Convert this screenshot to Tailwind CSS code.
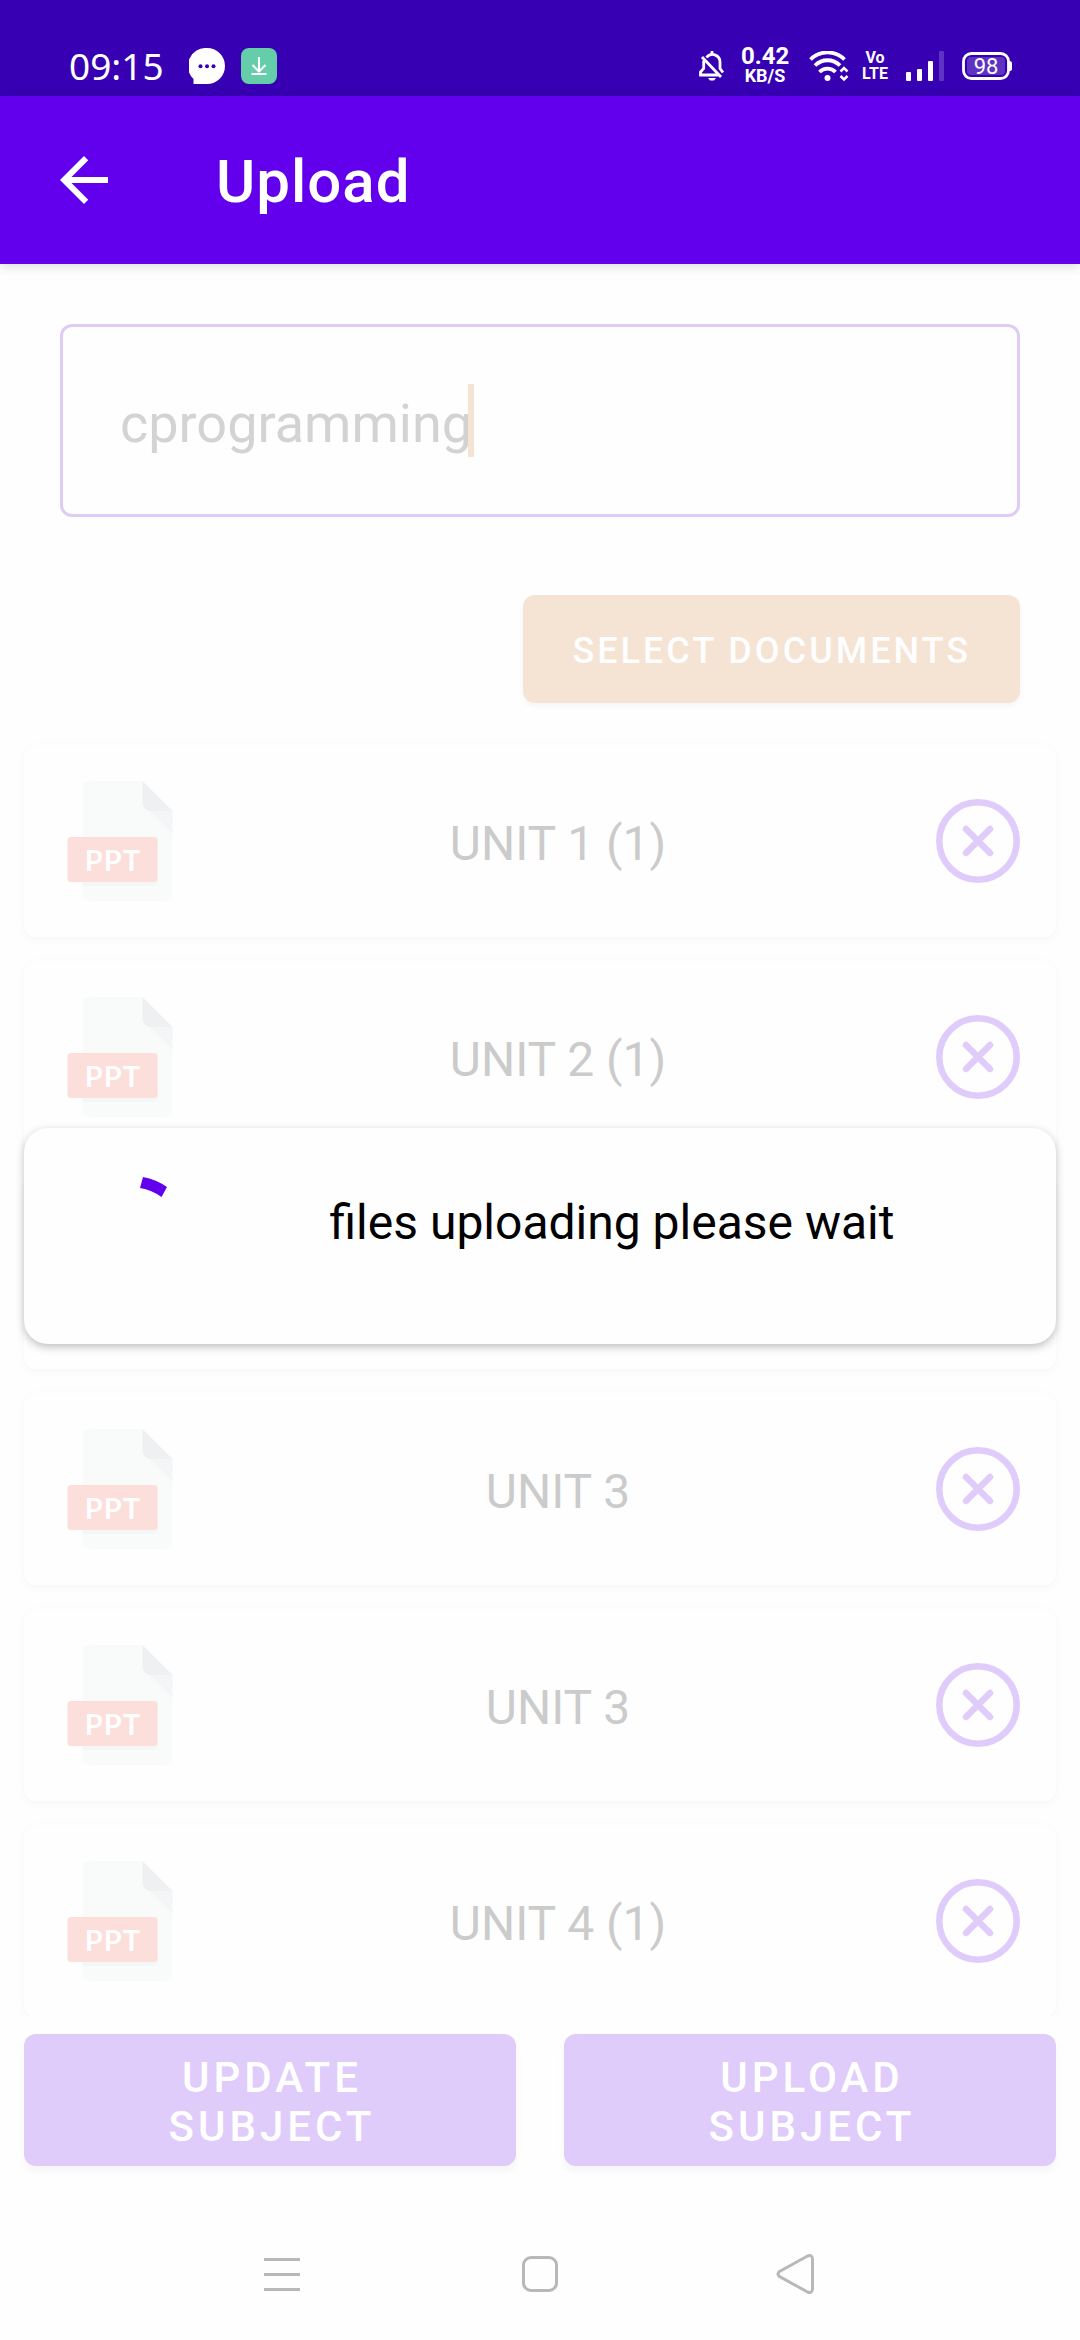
<!DOCTYPE html>
<html lang="en">
<head>
<meta charset="utf-8">
<meta name="viewport" content="width=device-width, initial-scale=1">
<title>Upload</title>
<script src="https://cdn.jsdelivr.net/npm/@tailwindcss/browser@4"></script>
</head>
<body class="bg-[#fefefe] font-['Roboto',sans-serif]">
<svg class="hidden" aria-hidden="true">
  <symbol id="ppt" viewBox="0 0 120 120">
    <path d="M29.500 0H82.500L112.500 30V113a7 7 0 0 1-7 7H29.500a7 7 0 0 1-7-7V7a7 7 0 0 1 7-7z" fill="#f9fbfa"/>
    <path d="M82.500 0L112.500 30H90a7.500 7.500 0 0 1-7.500-7.500z" fill="#eff0f2"/>
    <path d="M90 30H112.500V52.500z" fill="#f4f5f7"/>
    <path d="M22.500 101H97.500v1a3 3 0 0 1-3 3H22.500z" fill="#f4f6f7"/>
    <rect x="7.500" y="56" width="90" height="45" rx="3.500" fill="#fcdedb"/>
    <text x="53" y="90" text-anchor="middle" fill="#fefefe" class="font-['Lato',sans-serif] text-[29px] font-bold tracking-[1px]">PPT</text>
  </symbol>
  <symbol id="remove" viewBox="0 0 84 84">
    <g fill="none" stroke="#dfccfb" stroke-width="6.500"><circle cx="42" cy="42" r="38.700"/><path d="M30 30L54 54M54 30L30 54" stroke-linecap="round"/></g>
  </symbol>
</svg>
<div class="flex h-screen flex-col">
  <div class="flex h-24 shrink-0 items-center justify-between bg-[#3700b3] pt-9 pr-[67px] pl-[69px] text-white">
    <div class="flex items-center">
      <span class="w-[120px] font-['Noto_Sans',sans-serif] text-[37px] leading-9">09:15</span>
      <svg class="size-9" viewBox="0 0 36 36"><path d="M18 0a18 18 0 0 1 0 36H4.500V31A18 18 0 0 1 18 0z" fill="#fff"/><g fill="#3700b3"><circle cx="11.500" cy="18.300" r="2"/><circle cx="18" cy="18.300" r="2"/><circle cx="24.500" cy="18.300" r="2"/></g></svg>
      <svg class="ml-4 size-9" viewBox="0 0 36 36"><rect width="36" height="36" rx="8" fill="#66cdaa"/><path d="M18 9V23M11.500 17L18 23.500L24.500 17M10.500 26H25.500" fill="none" stroke="#fff" stroke-width="2"/></svg>
    </div>
    <div class="flex items-center">
      <svg class="h-[30px] w-[26px]" viewBox="0 0 26 30" fill="none" stroke="#fff" stroke-width="2.800"><path d="M7.500 6.500A7.500 7.500 0 0 1 21 11V17.500L24 21.500M4.700 9.500V17.500L1.500 21V24H19.500M3 6L22 26M13 0V4"/><path d="M9 27H17L15 29.500H11z" fill="#fff" stroke="none"/></svg>
      <div class="ml-4 w-12 text-center font-bold"><div class="text-2xl leading-5">0.42</div><div class="text-lg leading-5">KB/S</div></div>
      <svg class="ml-5 h-[30px] w-10" viewBox="0 0 40 30" fill="none" stroke="#fff" stroke-width="3.800"><path d="M1.500 8.500A24 24 0 0 1 35.500 8.500M6 14.500A17.500 17.500 0 0 1 31 14.500M10.500 21A11 11 0 0 1 26.500 21"/><circle cx="18.500" cy="27" r="3" fill="#fff" stroke="none"/><path d="M31.500 20.500L35 17L38.500 20.500M31.500 25L35 28.500L38.500 25" stroke-width="2.500"/></svg>
      <div class="ml-3 w-7 text-center text-[16px] leading-4 font-bold"><div>Vo</div><div>LTE</div></div>
      <svg class="ml-4 h-[30px] w-10" viewBox="0 0 40 30" fill="#fff"><rect x="1" y="21" width="5" height="9" rx="1"/><rect x="12" y="18" width="5" height="12" rx="1"/><rect x="23" y="10" width="5" height="20" rx="1"/><rect x="34" y="0" width="5" height="30" rx="1" fill-opacity=".2"/></svg>
      <svg class="ml-4 h-[30px] w-[52px]" viewBox="0 0 52 30"><rect x="2.500" y="2.500" width="45" height="25" rx="8" fill="none" stroke="#fff" stroke-width="2.800"/><rect x="6" y="6" width="38" height="18" rx="4" fill="#fff" fill-opacity=".2"/><path d="M48 10q3 0 3 2v6q0 2-3 2z" fill="#fff"/><text x="25" y="23" text-anchor="middle" fill="#fff" class="text-[22px]">98</text></svg>
    </div>
  </div>
  <header class="relative z-10 flex h-42 shrink-0 items-center bg-[#6200ee] pl-12 text-white shadow-[0_3px_10px_rgba(0,0,0,0.12)]">
    <button type="button" aria-label="Back"><svg class="size-18" viewBox="0 0 24 24" fill="#fff"><path d="M20 11H7.830l5.590-5.590L12 4l-8 8 8 8 1.410-1.410L7.830 13H20z"/></svg></button>
    <h1 class="ml-24 pt-1 text-6xl font-medium tracking-[1px]">Upload</h1>
  </header>
  <main class="relative flex min-h-0 flex-1 flex-col">
    <form class="flex flex-col items-end px-15 pt-15">
      <div class="relative w-full">
        <input type="text" aria-label="Subject name" value="cprogramming" class="h-[193px] w-full rounded-xl border-3 border-[#dfccf6] bg-transparent px-[57px] pt-1.5 text-[54px] text-[#d3d3d3] outline-none">
        <span class="absolute top-15 left-[408px] h-[73px] w-1.5 bg-[#f5e3d4]"></span>
      </div>
      <button type="button" class="mt-[78px] h-27 rounded-xl bg-[#f5e3d4] px-[49px] pt-1 text-4xl font-medium tracking-[3px] text-[#fefefe] shadow-[0_3px_6px_rgba(0,0,0,0.04)]">SELECT DOCUMENTS</button>
    </form>
    <ul class="mt-[18px] flex min-h-0 flex-1 flex-col gap-6 overflow-hidden px-6 pt-6 text-5xl text-[#cbcbcb]">
      <li class="flex h-48 shrink-0 items-center rounded-xl bg-[#fefefe] px-9 shadow-[0_2px_8px_rgba(0,0,0,0.04)]"><svg class="size-30"><use href="#ppt"/></svg><span class="flex-1 pt-1.5 text-center">UNIT 1 (1)</span><button type="button" aria-label="Remove"><svg class="size-21"><use href="#remove"/></svg></button></li>
      <li class="flex h-48 shrink-0 items-center rounded-xl bg-[#fefefe] px-9 shadow-[0_2px_8px_rgba(0,0,0,0.04)]"><svg class="size-30"><use href="#ppt"/></svg><span class="flex-1 pt-1.5 text-center">UNIT 2 (1)</span><button type="button" aria-label="Remove"><svg class="size-21"><use href="#remove"/></svg></button></li>
      <li class="h-48 shrink-0 rounded-xl bg-[#fefefe] shadow-[0_2px_8px_rgba(0,0,0,0.04)]"></li>
      <li class="flex h-48 shrink-0 items-center rounded-xl bg-[#fefefe] px-9 shadow-[0_2px_8px_rgba(0,0,0,0.04)]"><svg class="size-30"><use href="#ppt"/></svg><span class="flex-1 pt-1.5 text-center">UNIT 3</span><button type="button" aria-label="Remove"><svg class="size-21"><use href="#remove"/></svg></button></li>
      <li class="flex h-48 shrink-0 items-center rounded-xl bg-[#fefefe] px-9 shadow-[0_2px_8px_rgba(0,0,0,0.04)]"><svg class="size-30"><use href="#ppt"/></svg><span class="flex-1 pt-1.5 text-center">UNIT 3</span><button type="button" aria-label="Remove"><svg class="size-21"><use href="#remove"/></svg></button></li>
      <li class="flex h-48 shrink-0 items-center rounded-xl bg-[#fefefe] px-9 shadow-[0_2px_8px_rgba(0,0,0,0.04)]"><svg class="size-30"><use href="#ppt"/></svg><span class="flex-1 pt-1.5 text-center">UNIT 4 (1)</span><button type="button" aria-label="Remove"><svg class="size-21"><use href="#remove"/></svg></button></li>
    </ul>
    <div class="grid grid-cols-2 gap-12 px-6 pt-[18px] pb-[42px] text-[42px] leading-[49px] font-medium tracking-[4px] text-white">
      <button type="button" class="h-33 rounded-xl bg-[#dfccfb] pt-1 pr-24 pl-25 shadow-[0_5px_8px_rgba(0,0,0,0.04)]">UPDATE SUBJECT</button>
      <button type="button" class="h-33 rounded-xl bg-[#dfccfb] pt-1 pr-24 pl-25 shadow-[0_5px_8px_rgba(0,0,0,0.04)]">UPLOAD SUBJECT</button>
    </div>
    <div role="dialog" aria-label="Uploading" class="absolute inset-x-6 top-1/2 flex h-54 -translate-y-1/2 items-center rounded-3xl bg-[#fefefe] shadow-[0_3px_8px_rgba(0,0,0,0.25)]">
      <svg class="h-54 w-36" viewBox="0 0 144 216"><path d="M119 49A62 62 0 0 1 143 59L137.500 69A50 50 0 0 0 116 60z" fill="#6200ee"/></svg>
      <p class="flex-1 pb-[26px] text-center text-5xl text-black">files uploading please wait</p>
    </div>
  </main>
  <nav class="h-33 shrink-0" aria-label="System">
    <div class="mx-auto grid h-full max-w-[774px] grid-cols-3 place-items-center">
      <button type="button" aria-label="Recent apps"><svg class="size-12" viewBox="0 0 48 48"><path d="M6 9.500H42M6 24.500H42M6 39.500H42" stroke="#b8b8b8" stroke-width="3"/></svg></button>
      <button type="button" aria-label="Home"><svg class="size-12" viewBox="0 0 48 48"><rect x="7.500" y="7.500" width="33" height="33" rx="7.500" fill="none" stroke="#b8b8b8" stroke-width="3"/></svg></button>
      <button type="button" aria-label="Back"><svg class="size-12" viewBox="0 0 48 48"><path d="M5.500 21.500L33.500 6Q38.500 4 38.500 9.500V38.500Q38.500 44 33.500 42L5.500 26.500Q2.500 24 5.500 21.500z" fill="none" stroke="#b8b8b8" stroke-width="3"/></svg></button>
    </div>
  </nav>
</div>
</body>
</html>
